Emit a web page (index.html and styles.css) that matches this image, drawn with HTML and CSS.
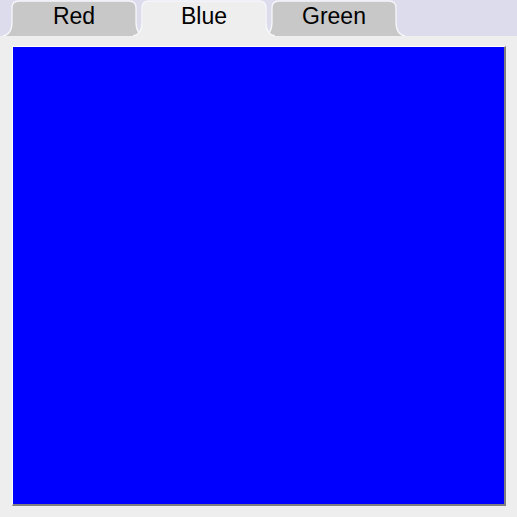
FILE: index.html
```html
<!DOCTYPE html>
<html>
<head>
<meta charset="utf-8">
<link rel="stylesheet" href="styles.css">
</head>
<body>
<div class="window">
  <div class="tabstrip">
    <div class="tab">
      <svg class="tab-shape" viewBox="0 0 142 36" preserveAspectRatio="none">
        <path class="fill" d="M0,36 C6,35 9,30 9,22 L9,8 C9,3 11,1 16,1 L126,1 C131,1 133,3 133,8 L133,22 C133,30 136,35 142,36 Z"/>
        <path class="edge" d="M0,36 C6,35 9,30 9,22 L9,8 C9,3 11,1 16,1 L126,1 C131,1 133,3 133,8 L133,22 C133,30 136,35 142,36"/>
      </svg>
      <span class="label">Red</span>
    </div>
    <div class="tab selected">
      <svg class="tab-shape" viewBox="0 0 142 36" preserveAspectRatio="none">
        <path class="fill" d="M0,36 C6,35 9,30 9,22 L9,8 C9,3 11,1 16,1 L126,1 C131,1 133,3 133,8 L133,22 C133,30 136,35 142,36 Z"/>
        <path class="edge" d="M0,36 C6,35 9,30 9,22 L9,8 C9,3 11,1 16,1 L126,1 C131,1 133,3 133,8 L133,22 C133,30 136,35 142,36"/>
      </svg>
      <span class="label">Blue</span>
    </div>
    <div class="tab">
      <svg class="tab-shape" viewBox="0 0 142 36" preserveAspectRatio="none">
        <path class="fill" d="M0,36 C6,35 9,30 9,22 L9,8 C9,3 11,1 16,1 L126,1 C131,1 133,3 133,8 L133,22 C133,30 136,35 142,36 Z"/>
        <path class="edge" d="M0,36 C6,35 9,30 9,22 L9,8 C9,3 11,1 16,1 L126,1 C131,1 133,3 133,8 L133,22 C133,30 136,35 142,36"/>
      </svg>
      <span class="label">Green</span>
    </div>
  </div>
  <div class="panel">
    <div class="content"></div>
  </div>
</div>
</body>
</html>
```
FILE: styles.css
```css
html, body {
  margin: 0;
  padding: 0;
}
body {
  width: 517px;
  height: 517px;
  overflow: hidden;
  font-family: "Liberation Sans", Arial, sans-serif;
}
.window {
  display: flex;
  flex-direction: column;
  width: 517px;
  height: 517px;
}
.tabstrip {
  display: flex;
  height: 36px;
  padding-left: 3px;
  background: #dcdcec;
  flex: none;
}
.tab {
  position: relative;
  width: 142px;
  height: 36px;
  display: flex;
  justify-content: center;
  z-index: 1;
}
.tab + .tab {
  margin-left: -12px;
}
.tab.selected {
  z-index: 2;
}
.tab-shape {
  position: absolute;
  left: 0;
  top: 0;
  width: 100%;
  height: 100%;
  overflow: visible;
}
.tab-shape .fill {
  fill: #c8c8c8;
}
.tab.selected .tab-shape .fill {
  fill: #eeeeee;
}
.tab-shape .edge {
  fill: none;
  stroke: #f6f6fb;
  stroke-width: 1.3;
}
.label {
  position: relative;
  font-size: 23px;
  line-height: 32px;
  color: #000;
}
.panel {
  flex: 1;
  display: flex;
  background: #eeeeee;
  padding: 10px 11px 11px 12px;
}
.content {
  flex: 1;
  background: #0000ff;
  border-top: 1px solid #ffffff;
  border-left: 1px solid #ffffff;
  border-right: 2px solid #808080;
  border-bottom: 2px solid #808080;
}
```
